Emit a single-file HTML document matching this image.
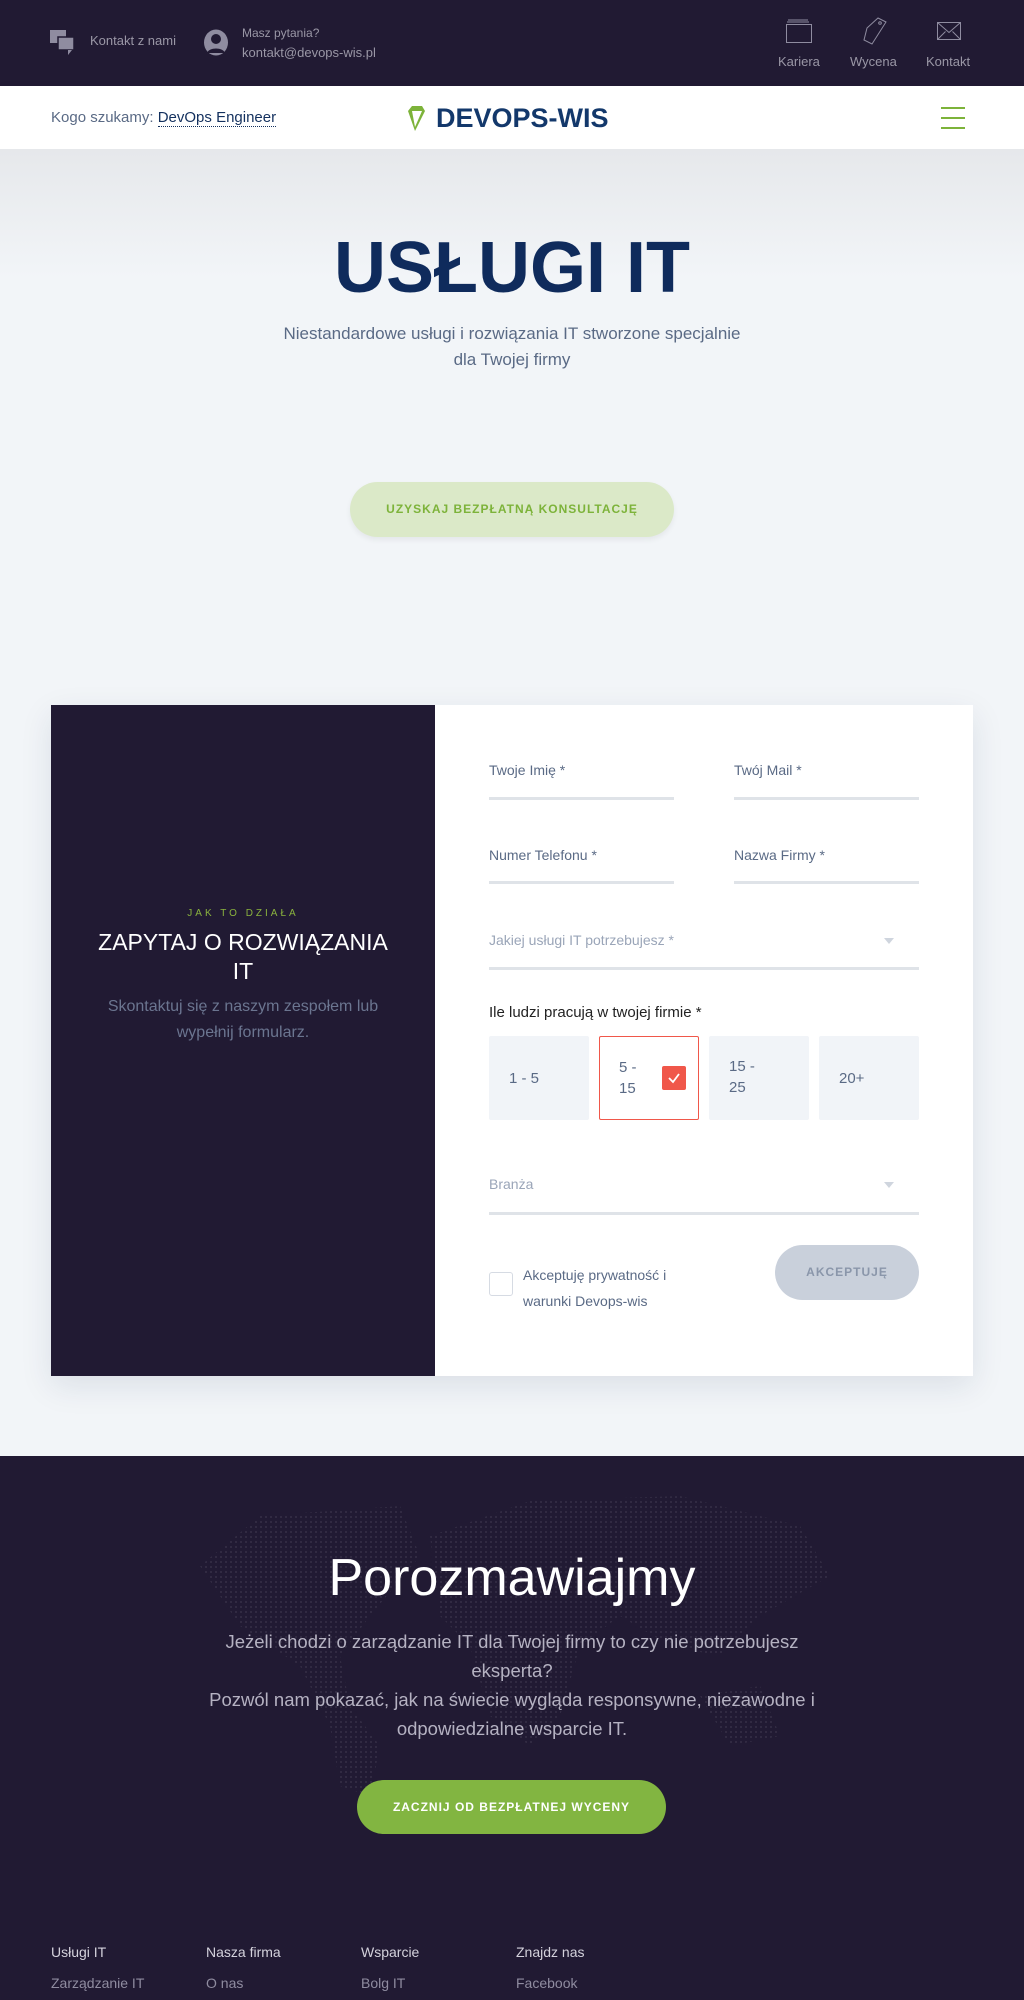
<!DOCTYPE html>
<html><head><meta charset="utf-8"><style>
*{margin:0;padding:0;box-sizing:border-box}
body{width:1024px;height:2000px;overflow:hidden;font-family:"Liberation Sans",sans-serif;background:#f2f5f8;position:relative}
.abs{position:absolute}
.top{left:0;top:0;width:1024px;height:86px;background:#211a33;color:#9a97a6;font-size:13px}
.nav{left:0;top:86px;width:1024px;height:63px;background:#fff;box-shadow:0 4px 12px rgba(0,0,0,.06)}
.hero-bg{left:0;top:149px;width:1024px;height:130px;background:linear-gradient(#e6e8eb,#f2f5f8)}
.lbl{font-size:14px;color:#5a6a85}
.line{height:3px;background:#dfe3e8}
.box{background:#f1f4f8;color:#5a6a85;font-size:15px;border-radius:2px}
.dark{left:0;top:1456px;width:1024px;height:544px;background:#211a33}
.fh{font-size:14px;color:#d4d2dc}
.fl{font-size:14px;color:#8f8ca0}
</style></head><body>
<div class="abs top">
  <svg class="abs" style="left:50px;top:30px" width="28" height="26" viewBox="0 0 28 26"><rect x="0" y="0" width="16" height="13" fill="#8f8ca0"/><rect x="8" y="7" width="16" height="13" fill="#8f8ca0" stroke="#211a33" stroke-width="1.5"/><path d="M18 20v5l4-5z" fill="#8f8ca0"/></svg>
  <div class="abs" style="left:90px;top:33px">Kontakt z nami</div>
  <svg class="abs" style="left:203px;top:29px" width="26" height="27" viewBox="0 0 26 27"><ellipse cx="13" cy="13.5" rx="12" ry="13" fill="#8f8ca0"/><circle cx="13" cy="10" r="5" fill="#211a33"/><path d="M4 24c2-6 16-6 18 0" fill="#211a33"/></svg>
  <div class="abs" style="left:242px;top:26px;font-size:12px">Masz pytania?</div>
  <div class="abs" style="left:242px;top:45px">kontakt@devops-wis.pl</div>
  <svg class="abs" style="left:784px;top:18px" width="30" height="26" viewBox="0 0 30 26"><path d="M3 4h22M4 2h20" stroke="#8f8ca0" stroke-width="1"/><rect x="2.5" y="6.5" width="25" height="18" fill="none" stroke="#8f8ca0"/></svg>
  <div class="abs" style="left:778px;top:54px">Kariera</div>
  <svg class="abs" style="left:858px;top:16px" width="30" height="30" viewBox="0 0 30 30"><path d="M20 2l8 4-14 22-8-4 3-12z" fill="none" stroke="#8f8ca0"/><circle cx="22" cy="7" r="1.3" fill="none" stroke="#8f8ca0"/></svg>
  <div class="abs" style="left:850px;top:54px">Wycena</div>
  <svg class="abs" style="left:937px;top:22px" width="24" height="18" viewBox="0 0 24 18"><rect x=".5" y=".5" width="23" height="17" fill="none" stroke="#8f8ca0"/><path d="M.5 .5l11.5 10 11.5-10M.5 17.5l8-8M23.5 17.5l-8-8" fill="none" stroke="#8f8ca0"/></svg>
  <div class="abs" style="left:926px;top:54px">Kontakt</div>
</div>
<div class="abs nav">
  <div class="abs" style="left:51px;top:23px;font-size:15px;color:#5a6a85">Kogo szukamy: <span style="color:#13305e;border-bottom:1px dotted #13305e">DevOps Engineer</span></div>
  <svg class="abs" style="left:407px;top:19px" width="24" height="28" viewBox="0 0 24 28"><path d="M1 6l4-5h10l3 5-10 20z" fill="#7db33a"/><path d="M5 6h10l-7 16z" fill="#fff"/></svg>
  <div class="abs" style="left:436px;top:17px;font-size:27px;font-weight:bold;color:#13386b">DEVOPS-WIS</div>
  <div class="abs" style="left:941px;top:21px;width:24px;height:2px;background:#7db33a"></div>
  <div class="abs" style="left:941px;top:31px;width:24px;height:2px;background:#7db33a"></div>
  <div class="abs" style="left:941px;top:41px;width:24px;height:2px;background:#7db33a"></div>
</div>
<div class="abs hero-bg"></div>
<div class="abs" style="left:0;top:227px;width:1024px;text-align:center;font-size:72px;font-weight:bold;color:#0f2b5c">USŁUGI IT</div>
<div class="abs" style="left:0;top:321px;width:1024px;text-align:center;font-size:17px;line-height:26px;color:#5a6a85">Niestandardowe usługi i rozwiązania IT stworzone specjalnie<br>dla Twojej firmy</div>
<div class="abs" style="left:350px;top:482px;width:324px;height:55px;border-radius:28px;background:#dbe9c8;box-shadow:0 3px 6px rgba(0,0,0,.06);color:#7db33a;font-size:12px;font-weight:bold;letter-spacing:1px;text-align:center;line-height:55px">UZYSKAJ BEZPŁATNĄ KONSULTACJĘ</div>

<div class="abs" style="left:51px;top:705px;width:922px;height:671px;background:#fff;box-shadow:0 10px 30px rgba(20,40,80,.1)"></div>
<div class="abs" style="left:51px;top:705px;width:384px;height:671px;background:#211a33">
  <div class="abs" style="left:0;top:203px;width:384px;text-align:center;font-size:10px;letter-spacing:3px;color:#8ab33e">JAK TO DZIAŁA</div>
  <div class="abs" style="left:47px;top:223px;width:290px;text-align:center;font-size:23px;line-height:29px;color:#fff">ZAPYTAJ O ROZWIĄZANIA IT</div>
  <div class="abs" style="left:47px;top:289px;width:290px;text-align:center;font-size:16px;line-height:26px;color:#6b7590">Skontaktuj się z naszym zespołem lub wypełnij formularz.</div>
</div>
<div class="abs lbl" style="left:489px;top:762px">Twoje Imię *</div>
<div class="abs line" style="left:489px;top:797px;width:185px"></div>
<div class="abs lbl" style="left:734px;top:762px">Twój Mail *</div>
<div class="abs line" style="left:734px;top:797px;width:185px"></div>
<div class="abs lbl" style="left:489px;top:847px">Numer Telefonu *</div>
<div class="abs line" style="left:489px;top:881px;width:185px"></div>
<div class="abs lbl" style="left:734px;top:847px">Nazwa Firmy *</div>
<div class="abs line" style="left:734px;top:881px;width:185px"></div>
<div class="abs lbl" style="left:489px;top:932px;color:#9aa5b8">Jakiej usługi IT potrzebujesz *</div>
<div class="abs" style="left:884px;top:938px;width:0;height:0;border-left:5px solid transparent;border-right:5px solid transparent;border-top:6px solid #cfd5de"></div>
<div class="abs line" style="left:489px;top:967px;width:430px"></div>
<div class="abs" style="left:489px;top:1004px;font-size:15px;color:#222">Ile ludzi pracują w twojej firmie *</div>
<div class="abs box" style="left:489px;top:1036px;width:100px;height:84px;padding:34px 0 0 20px">1 - 5</div>
<div class="abs" style="left:599px;top:1036px;width:100px;height:84px;border:1px solid #f0574a;border-radius:2px;font-size:15px;color:#5a6a85;padding:20px 0 0 19px;line-height:21px">5 -<br>15</div>
<div class="abs" style="left:662px;top:1066px;width:24px;height:24px;background:#f0574a;border-radius:2px"><svg width="24" height="24" viewBox="0 0 24 24"><path d="M7 12l4 4 6-8" fill="none" stroke="#fff" stroke-width="1.8"/></svg></div>
<div class="abs box" style="left:709px;top:1036px;width:100px;height:84px;padding:20px 0 0 20px;line-height:21px">15 -<br>25</div>
<div class="abs box" style="left:819px;top:1036px;width:100px;height:84px;padding:34px 0 0 20px">20+</div>
<div class="abs lbl" style="left:489px;top:1176px;color:#9aa5b8">Branża</div>
<div class="abs" style="left:884px;top:1182px;width:0;height:0;border-left:5px solid transparent;border-right:5px solid transparent;border-top:6px solid #cfd5de"></div>
<div class="abs line" style="left:489px;top:1212px;width:430px"></div>
<div class="abs" style="left:489px;top:1272px;width:24px;height:24px;border:1px solid #d6dbe3;border-radius:3px;background:#fff"></div>
<div class="abs lbl" style="left:523px;top:1262px;line-height:26px">Akceptuję prywatność i<br>warunki Devops-wis</div>
<div class="abs" style="left:775px;top:1245px;width:144px;height:55px;border-radius:28px;background:#c9d0db;color:#8a96aa;font-size:12px;font-weight:bold;letter-spacing:1px;text-align:center;line-height:55px">AKCEPTUJĘ</div>

<div class="abs dark">
  <svg class="abs" style="left:200px;top:40px" width="630" height="320" viewBox="0 0 630 320" opacity=".07">
    <defs><pattern id="d" width="5" height="5" patternUnits="userSpaceOnUse"><rect width="2" height="2" fill="#fff"/></pattern></defs>
    <path d="M0 70 L60 20 L200 10 L220 60 L170 120 L140 160 L150 210 L180 250 L170 300 L140 290 L130 230 L100 170 L40 130Z M230 40 L330 5 L480 0 L600 30 L630 80 L560 120 L520 160 L470 150 L420 120 L380 150 L360 220 L330 250 L290 220 L270 150 L240 120Z M500 200 L560 190 L580 240 L530 250Z" fill="url(#d)"/>
  </svg>
  <div class="abs" style="left:0;top:92px;width:1024px;text-align:center;font-size:52px;color:#fff">Porozmawiajmy</div>
  <div class="abs" style="left:205px;top:171px;width:614px;text-align:center;font-size:18.5px;line-height:29px;color:#b5b2c2">Jeżeli chodzi o zarządzanie IT dla Twojej firmy to czy nie potrzebujesz eksperta?<br>Pozwól nam pokazać, jak na świecie wygląda responsywne, niezawodne i odpowiedzialne wsparcie IT.</div>
  <div class="abs" style="left:357px;top:324px;width:309px;height:54px;border-radius:27px;background:#82b541;color:#fff;font-size:12px;font-weight:bold;letter-spacing:1px;text-align:center;line-height:54px">ZACZNIJ OD BEZPŁATNEJ WYCENY</div>
  <div class="abs fh" style="left:51px;top:488px">Usługi IT</div>
  <div class="abs fh" style="left:206px;top:488px">Nasza firma</div>
  <div class="abs fh" style="left:361px;top:488px">Wsparcie</div>
  <div class="abs fh" style="left:516px;top:488px">Znajdz nas</div>
  <div class="abs fl" style="left:51px;top:519px">Zarządzanie IT</div>
  <div class="abs fl" style="left:206px;top:519px">O nas</div>
  <div class="abs fl" style="left:361px;top:519px">Bolg IT</div>
  <div class="abs fl" style="left:516px;top:519px">Facebook</div>
</div>
</body></html>
